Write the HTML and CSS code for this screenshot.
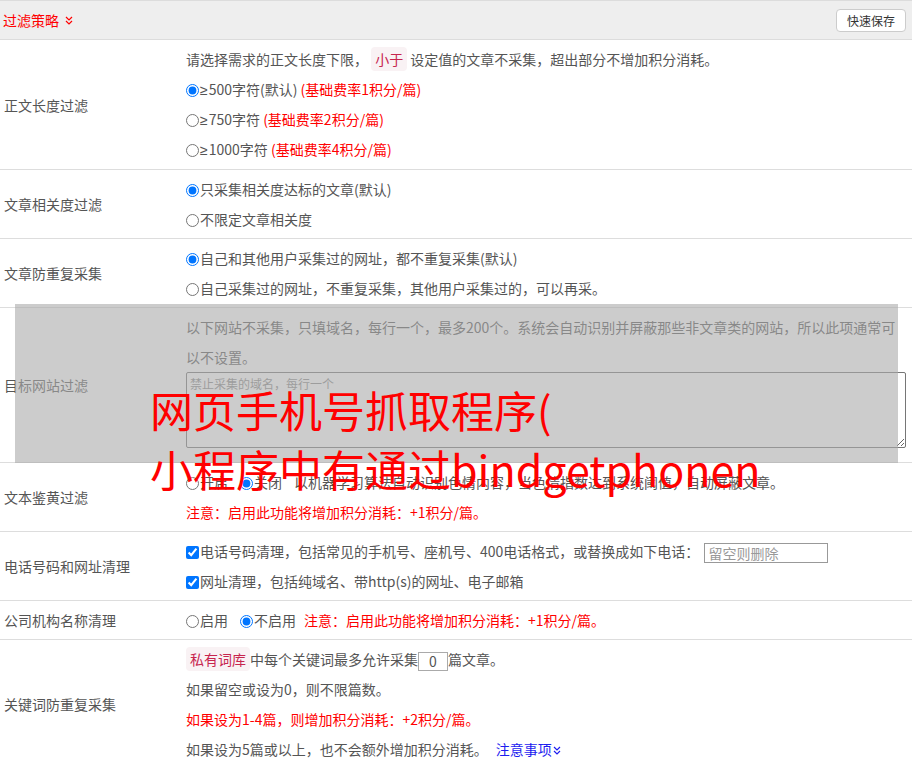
FILE: index.html
```html
<!DOCTYPE html>
<html lang="zh-CN">
<head>
<meta charset="utf-8">
<title>过滤策略</title>
<link rel="stylesheet" href="styles.css">
</head>
<body>
<div class="page">
  <div class="head">
    <span class="title">过滤策略 <svg class="dchev" width="8" height="9" viewBox="0 0 8 9"><path d="M1 1l3 3 3-3M1 5l3 3 3-3" fill="none" stroke="currentColor" stroke-width="1.2"/></svg></span>
    <button class="save" type="button">快速保存</button>
  </div>

  <div class="row first">
    <div class="lbl">正文长度过滤</div>
    <div class="val">
      <div class="line">请选择需求的正文长度下限， <code class="tag">小于</code> 设定值的文章不采集，超出部分不增加积分消耗。</div>
      <div class="line"><label><input type="radio" name="len" checked><span class="ge">≥</span>500字符(默认)</label> <span class="red">(基础费率1积分/篇)</span></div>
      <div class="line"><label><input type="radio" name="len"><span class="ge">≥</span>750字符</label> <span class="red">(基础费率2积分/篇)</span></div>
      <div class="line"><label><input type="radio" name="len"><span class="ge">≥</span>1000字符</label> <span class="red">(基础费率4积分/篇)</span></div>
    </div>
  </div>

  <div class="row">
    <div class="lbl">文章相关度过滤</div>
    <div class="val">
      <div class="line"><label><input type="radio" name="rel" checked>只采集相关度达标的文章(默认)</label></div>
      <div class="line"><label><input type="radio" name="rel">不限定文章相关度</label></div>
    </div>
  </div>

  <div class="row">
    <div class="lbl">文章防重复采集</div>
    <div class="val">
      <div class="line"><label><input type="radio" name="dup" checked>自己和其他用户采集过的网址，都不重复采集(默认)</label></div>
      <div class="line"><label><input type="radio" name="dup">自己采集过的网址，不重复采集，其他用户采集过的，可以再采。</label></div>
    </div>
  </div>

  <div class="row">
    <div class="lbl">目标网站过滤</div>
    <div class="val">
      <div class="para">以下网站不采集，只填域名，每行一个，最多200个。系统会自动识别并屏蔽那些非文章类的网站，所以此项通常可以不设置。</div>
      <textarea class="domains" placeholder="禁止采集的域名，每行一个"></textarea>
    </div>
  </div>

  <div class="row">
    <div class="lbl">文本鉴黄过滤</div>
    <div class="val">
      <div class="line"><label class="opt"><input type="radio" name="porn">开启</label><label class="opt"><input type="radio" name="porn" checked>关闭</label>以机器学习算法自动识别色情内容，当色情指数达到系统阈值，自动屏蔽文章。</div>
      <div class="line red">注意：启用此功能将增加积分消耗：+1积分/篇。</div>
    </div>
  </div>

  <div class="row">
    <div class="lbl">电话号码和网址清理</div>
    <div class="val">
      <div class="line"><label><input type="checkbox" checked>电话号码清理，包括常见的手机号、座机号、400电话格式，或替换成如下电话：</label> <input class="phone" type="text" placeholder="留空则删除"></div>
      <div class="line"><label><input type="checkbox" checked>网址清理，包括纯域名、带http(s)的网址、电子邮箱</label></div>
    </div>
  </div>

  <div class="row">
    <div class="lbl">公司机构名称清理</div>
    <div class="val">
      <div class="line"><label class="opt"><input type="radio" name="org">启用</label><label class="opt opt-s"><input type="radio" name="org" checked>不启用</label><span class="red">注意：启用此功能将增加积分消耗：+1积分/篇。</span></div>
    </div>
  </div>

  <div class="row last">
    <div class="lbl">关键词防重复采集</div>
    <div class="val">
      <div class="line"><code class="tag">私有词库</code>中每个关键词最多允许采集<input class="num" type="text" value="0">篇文章。</div>
      <div class="line">如果留空或设为0，则不限篇数。</div>
      <div class="line red">如果设为1-4篇，则增加积分消耗：+2积分/篇。</div>
      <div class="line">如果设为5篇或以上，也不会额外增加积分消耗。<a class="link" href="#">注意事项<svg class="dchev" width="8" height="9" viewBox="0 0 8 9"><path d="M1 1l3 3 3-3M1 5l3 3 3-3" fill="none" stroke="currentColor" stroke-width="1.2"/></svg></a></div>
    </div>
  </div>

  <div class="mask"></div>
  <div class="bigtitle">网页手机号抓取程序(<br>小程序中有通过bindgetphonen</div>
</div>
</body>
</html>
```

FILE: styles.css
```css
html, body {
  margin: 0;
  padding: 0;
  background: #fff;
}

body {
  font-family: "Noto Sans CJK SC", "Microsoft YaHei", sans-serif;
  font-size: 14px;
  color: #555;
}

.page {
  position: relative;
  width: 912px;
  height: 768px;
  overflow: hidden;
}

.head {
  display: flex;
  align-items: center;
  justify-content: space-between;
  height: 38px;
  padding: 0 6px 0 3px;
  background: #eee;
  border-top: 1px solid #dcdcdc;
  border-bottom: 1px solid #dcdcdc;
}

.title {
  color: #f00;
  font-size: 14px;
  display: inline-flex;
  align-items: center;
  gap: 6px;
}

.dchev {
  display: inline-block;
}

.save {
  font-family: inherit;
  font-size: 12px;
  color: #333;
  background: #fff;
  border: 1px solid #ccc;
  border-radius: 4px;
  height: 23px;
  width: 70px;
  padding: 0;
  line-height: 21px;
}

.row {
  display: grid;
  grid-template-columns: 186px 1fr;
  border-bottom: 1px solid #ddd;
}

.lbl {
  display: flex;
  align-items: center;
  padding-left: 4px;
  color: #555;
}

.val {
  padding: 4px 6px 4px 0;
}

.first .val {
  padding-bottom: 5px;
}

.line {
  height: 30px;
  line-height: 30px;
  white-space: nowrap;
}

.para {
  line-height: 30px;
}

.ge {
  font-family: "Liberation Sans", "DejaVu Sans", sans-serif;
  margin-right: 1px;
}

.red {
  color: #f00;
}

.tag {
  font-family: inherit;
  font-size: 14px;
  color: #c7254e;
  background: #f9f2f4;
  border-radius: 4px;
  padding: 2px 4px;
}

input[type="radio"],
input[type="checkbox"] {
  width: 13px;
  height: 13px;
  margin: 0 1px 0 0;
  vertical-align: -2px;
}

.opt {
  margin-right: 12px;
}

.opt-s {
  margin-right: 8px;
}

.domains {
  display: block;
  box-sizing: border-box;
  width: 720px;
  height: 76px;
  margin: 0 0 10px 0;
  padding: 2px 3px;
  font-family: inherit;
  font-size: 12px;
  line-height: 18px;
  border: 1px solid #767676;
  border-radius: 2px;
  background: transparent;
}

.domains::placeholder {
  color: #8a8a8a;
}

.phone {
  box-sizing: border-box;
  width: 124px;
  height: 20px;
  padding: 0 3px;
  margin-left: 2px;
  font-family: inherit;
  font-size: 14px;
  border: 1px solid #999;
  border-radius: 0;
  vertical-align: middle;
}

.phone::placeholder {
  color: #999;
}

.num {
  box-sizing: border-box;
  width: 30px;
  height: 19px;
  padding: 0;
  margin: 0;
  text-align: center;
  font-family: inherit;
  font-size: 14px;
  color: #555;
  border: 1px solid #aaa;
  vertical-align: middle;
}

.link {
  color: #1d1df0;
  text-decoration: none;
  margin-left: 8px;
}

.link .dchev {
  vertical-align: 0;
  margin-left: 1px;
}

.mask {
  position: absolute;
  left: 15px;
  top: 304px;
  width: 883px;
  height: 159px;
  background: rgba(170, 170, 170, 0.6);
}

.bigtitle {
  position: absolute;
  left: 150px;
  top: 380px;
  font-size: 43px;
  line-height: 59px;
  color: #f00;
  white-space: nowrap;
}
```
